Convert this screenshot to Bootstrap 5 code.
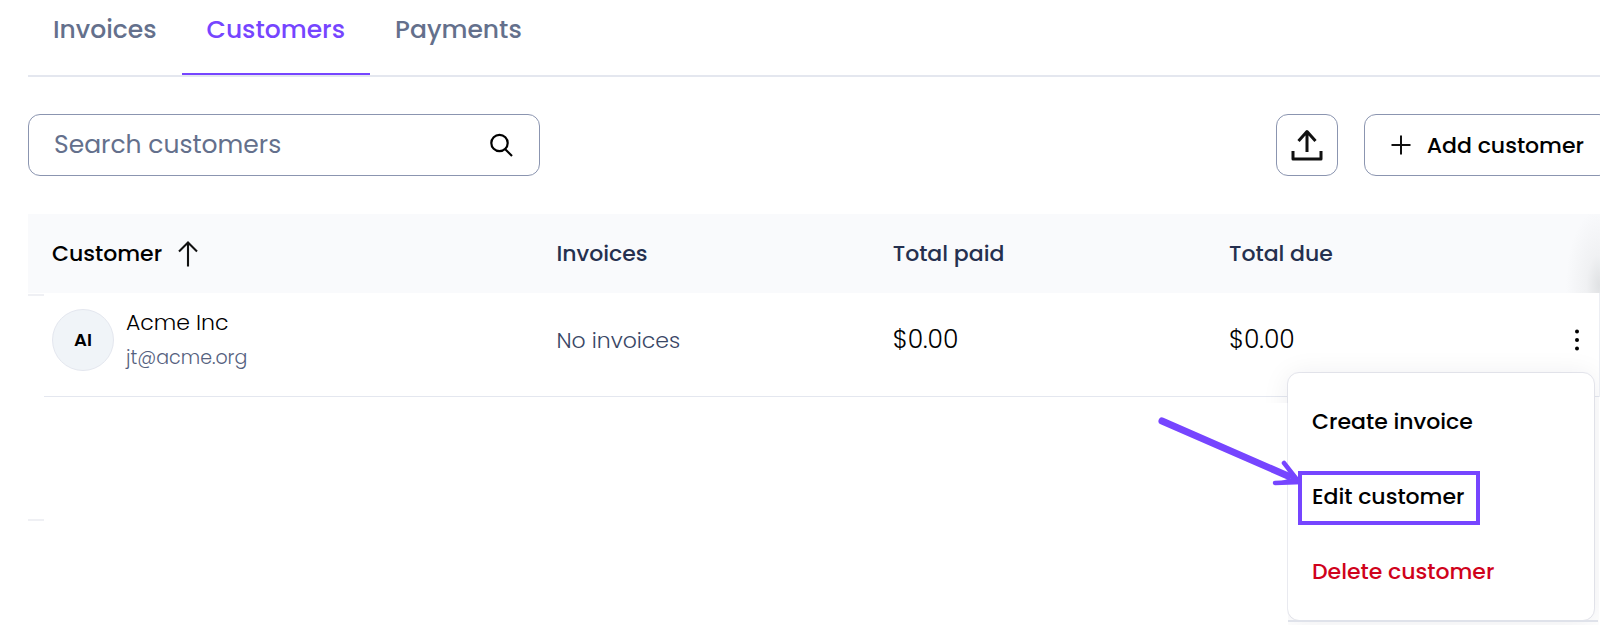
<!DOCTYPE html>
<html lang="en">
<head>
<meta charset="utf-8">
<meta name="viewport" content="width=device-width, initial-scale=1">
<title>Customers</title>
<link href="https://cdn.jsdelivr.net/npm/bootstrap@5.3.0/dist/css/bootstrap.min.css" rel="stylesheet">
<style>
  :root { --violet: #7645ff; --slate: #64708c; --navy: #25304f; --line: #e4e7ef; --edge: #8b95b0; }
  body { font-family: Poppins, Inter, "Open Sans", sans-serif; color: #000; background: #fff; }
  .page { padding-left: 28px; min-height: 100vh; overflow: clip; }
  .tabs { border-bottom: 2px solid var(--line); height: 77px; }
  .tabs .nav-link { padding: 0 25px; height: 75px; line-height: 59px; font-size: 25px; font-weight: 500; color: var(--slate); border-bottom: 2px solid transparent; }
  .tabs .nav-link.active { color: var(--violet); border-color: var(--violet); }
  .toolbar { padding: 37px 0 38px; gap: 26px; margin-right: -11px; }
  .search { width: 512px; height: 62px; border: 1px solid var(--edge); border-radius: 12px; padding: 0 25px; }
  .search input { border: 0; padding: 0; height: 100%; font-size: 25px; color: var(--slate); box-shadow: none !important; }
  .search input::placeholder { color: var(--slate); opacity: 1; }
  .tool { height: 62px; border: 1px solid var(--edge); border-radius: 12px; font-size: 22px; font-weight: 500; color: #000; }
  .tool-upload { width: 62px; padding: 0; }
  .tool-add { padding: 0 26px; gap: 16px; }
  .grid-table { table-layout: fixed; margin: 0; width: 100%; }
  .grid-table th, .grid-table td { padding: 0 0 0 24px; vertical-align: middle; text-align: left; font-weight: 300; }
  .grid-table th { height: 79px; font-size: 22px; font-weight: 500; color: var(--navy); }
  .grid-table thead { background: radial-gradient(ellipse 34px 76px at 100% 90%, #dfe1e3, #f0f1f3 40%, #f9fafc), #f9fafc; }
  .grid-table th.sorted { color: #000; }
  .data-row { height: 104px; background: linear-gradient(var(--line), var(--line)) 16px 100% / 100% 1px no-repeat, linear-gradient(#eff0f4, #eff0f4) 0 1px / 16px 2px no-repeat; }
  .data-row td:last-child { border-right: 1px solid #eceef3; }
  .rest-row { height: 124px; background: linear-gradient(#eff0f4, #eff0f4) 0 100% / 16px 2px no-repeat; }
  .avatar { width: 62px; height: 62px; background: #f0f4f8; border: 1px solid #e4e7ef; font-size: 18px; line-height: 24px; font-weight: 600; }
  .person { padding-bottom: 10px; gap: 12px; }
  .person-name { font-size: 22px; line-height: 34px; padding-top: 2px; }
  .person-mail { font-size: 19px; line-height: 36px; color: #55617e; }
  .lift { padding-bottom: 10px; }
  .none { font-size: 22px; color: #3a4766; }
  .money { font-size: 25px; line-height: 40px; }
  .more { padding: 8px 18px; border: 0; line-height: 1; }
  .row-menu { margin-right: 1px; }
  .actions { top: 51px; right: 3px; left: auto; width: 308px; padding: 11px 0; border: 1px solid #e9eaf0; border-radius: 12px; font-size: 22px; }
  .actions::before { content: ""; position: absolute; inset: 0; z-index: -1; border-radius: 12px; box-shadow: 0 2px 28px rgba(20, 20, 50, .08); clip-path: polygon(-40px -40px, calc(100% + 5px) -40px, calc(100% + 5px) calc(100% + 5px), 0 calc(100% + 5px), 0 30px, -40px 30px); }
  .actions::after { content: ""; position: absolute; top: 100%; left: 0; right: -4px; border-top: 2px solid #dfe2ea; }
  .actions .dropdown-item { height: 75px; padding: 0 24px; font-weight: 500; color: #000; background: none; }
  .actions .dropdown-item.danger { color: #d0021b; }
  .marked::after { content: ""; position: absolute; inset: -9px -16px -12px -14px; border: 4px solid var(--violet); }
  .pointer { position: absolute; right: 100%; bottom: 27px; margin-right: 10px; pointer-events: none; }
</style>
</head>
<body>
<main class="page">
  <nav class="tabs nav flex-nowrap" aria-label="Sections">
    <a class="nav-link" href="#invoices">Invoices</a>
    <a class="nav-link active" href="#customers" aria-current="page">Customers</a>
    <a class="nav-link" href="#payments">Payments</a>
  </nav>

  <div class="toolbar d-flex align-items-center">
    <form class="search d-flex align-items-center me-auto">
      <input class="form-control bg-transparent" id="q" type="text" aria-label="Search customers" placeholder="Search customers">
      <svg class="flex-shrink-0" width="26" height="26" viewBox="0 0 26 26" fill="none" stroke="#000" stroke-width="2.2" aria-hidden="true"><circle cx="11.500" cy="11" r="8.2"/><path d="M17 17l7 7"/></svg>
    </form>
    <button class="tool tool-upload btn d-flex align-items-center justify-content-center" type="button" aria-label="Upload">
      <svg width="32" height="34" viewBox="0 0 32 34" fill="none" stroke="#111" stroke-width="3" stroke-linejoin="round" aria-hidden="true"><path d="M16 24V4M7.5 13L16 3.5L24.500 13M2 23v8h28v-8"/></svg>
    </button>
    <button class="tool tool-add btn d-flex align-items-center" type="button">
      <svg width="20" height="20" viewBox="0 0 20 20" stroke="#111" stroke-width="2" aria-hidden="true"><path d="M10 .5v19M.5 10h19"/></svg>
      Add customer
    </button>
  </div>

  <table class="grid-table">
    <colgroup><col style="width:32.1%"><col style="width:21.4%"><col style="width:21.4%"><col></colgroup>
    <thead>
      <tr>
        <th class="sorted" scope="col" aria-sort="ascending"><span class="d-flex align-items-center gap-3">Customer
          <svg width="20" height="26" viewBox="0 0 20 26" fill="none" stroke="#111" stroke-width="2.100" aria-hidden="true"><path d="M10 25.500V2M1 10.500L10 1.500L19 10.500"/></svg></span></th>
        <th scope="col">Invoices</th>
        <th scope="col">Total paid</th>
        <th scope="col">Total due</th>
      </tr>
    </thead>
    <tbody>
      <tr class="data-row">
        <td>
          <div class="person d-flex align-items-center">
            <span class="avatar rounded-circle d-flex align-items-center justify-content-center">AI</span>
            <div>
              <div class="person-name">Acme Inc</div>
              <div class="person-mail">jt@acme.org</div>
            </div>
          </div>
        </td>
        <td><div class="lift none">No invoices</div></td>
        <td><div class="lift money">$0.00</div></td>
        <td>
          <div class="lift d-flex align-items-center justify-content-between">
            <span class="money">$0.00</span>
            <div class="row-menu dropdown">
              <button class="more btn" type="button" aria-label="Customer actions" aria-expanded="true">
                <svg width="6" height="22" viewBox="0 0 6 22" fill="#000" aria-hidden="true"><circle cx="3" cy="2.500" r="2"/><circle cx="3" cy="11" r="2"/><circle cx="3" cy="19.500" r="2"/></svg>
              </button>
              <div class="actions dropdown-menu show">
                <button class="dropdown-item" type="button">Create invoice</button>
                <button class="dropdown-item" type="button"><span class="marked position-relative d-inline-block">Edit customer
                  <svg class="pointer" width="144" height="70" viewBox="0 0 144 70" fill="none" stroke="#7645ff" stroke-linecap="round" aria-hidden="true"><path d="M4 5L130 60" stroke-width="7"/><path d="M126 47L141 66L117 67" stroke-width="4.500"/><path d="M126 47L133 62L117 67L141 66Z" fill="#7645ff" stroke="none"/></svg></span></button>
                <button class="dropdown-item danger" type="button">Delete customer</button>
              </div>
            </div>
          </div>
        </td>
      </tr>
      <tr class="rest-row"><td colspan="4"></td></tr>
    </tbody>
  </table>
</main>
<script src="https://cdn.jsdelivr.net/npm/bootstrap@5.3.0/dist/js/bootstrap.bundle.min.js"></script>
</body>
</html>
